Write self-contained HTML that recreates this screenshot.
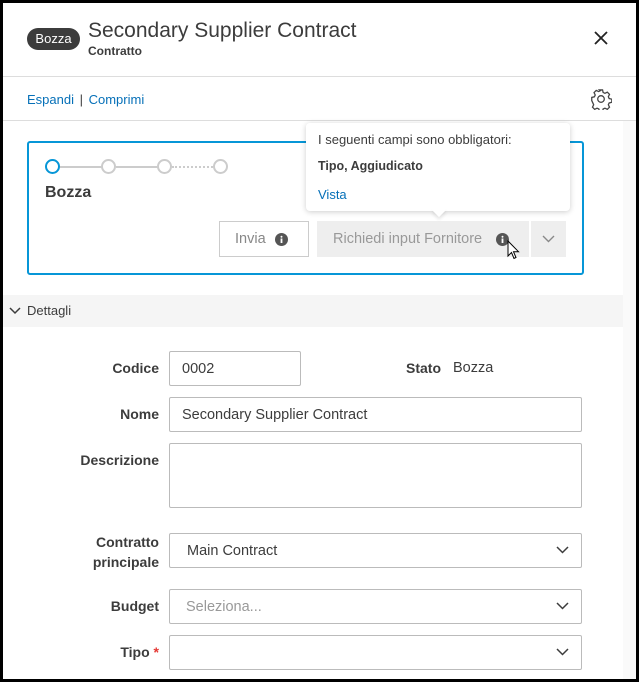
<!DOCTYPE html>
<html><head><meta charset="utf-8"><style>
*{box-sizing:border-box;margin:0;padding:0}
body{width:639px;height:682px;background:#000;position:relative;overflow:hidden;font-family:"Liberation Sans",sans-serif;color:#3c3c3c;letter-spacing:0}
.a{position:absolute}
#page{left:3px;top:3px;width:633px;height:676px;background:#fff;overflow:hidden}
.line{height:1px;background:#ddd;left:0;width:633px}
.inp{border:1px solid #bbb;border-radius:2px;background:#fff;font-size:14.5px;color:#3c3c3c;padding-left:12px;display:flex;align-items:center}
.lbl{font-size:14px;font-weight:bold;color:#3c3c3c;text-align:right;width:160px;left:0}
.chev{position:absolute;right:12px;top:12px}
.circ{width:15px;height:15px;border:2px solid #ccc;border-radius:50%;background:#fff}
</style></head><body>
<div id="page" class="a">
<div class="a" style="left:24px;top:25px;width:53px;height:22px;border-radius:11px;background:#3c3c3c;color:#fff;font-size:13px;text-align:center;line-height:22px">Bozza</div>
<div class="a" style="left:85px;top:16px;font-size:21px;color:#3c3c3c">Secondary Supplier Contract</div>
<div class="a" style="left:85px;top:41px;font-size:12px;font-weight:bold;color:#3c3c3c">Contratto</div>
<svg class="a" style="left:591px;top:28px" width="14" height="14"><path d="M1 1L13 13M13 1L1 13" stroke="#222" stroke-width="1.8"/></svg>
<div class="a line" style="top:73px"></div>
<div class="a" style="left:24px;top:89px;font-size:13px;color:#0670b8">Espandi <span style="color:#3c3c3c;margin:0 2px">|</span> Comprimi</div>
<svg class="a" style="left:587px;top:85px" width="22" height="22" viewBox="0 0 24 24"><path d="M10.3 2h3.4l.6 2.8 2 1 2.6-1.3 2.4 2.4-1.3 2.6.9 2 2.9.7v3.4l-2.9.7-.9 2 1.3 2.6-2.4 2.4-2.6-1.3-2 .9-.6 2.9h-3.4l-.6-2.9-2-.9-2.6 1.3-2.4-2.4 1.3-2.6-.9-2L1.9 13.7v-3.4l2.9-.7.9-2-1.3-2.6 2.4-2.4 2.6 1.3 2-1z" fill="none" stroke="#444" stroke-width="1.4"/><circle cx="12" cy="12" r="3.6" fill="none" stroke="#444" stroke-width="1.4"/></svg>
<div class="a line" style="top:117px"></div>
<div class="a" style="left:620px;top:118px;width:13px;height:560px;background:#fafafa"></div>
<div class="a" style="left:24px;top:138px;width:557px;height:134px;border:2px solid #0696d7;border-radius:3px"></div>
<div class="a" style="left:57px;top:163px;width:48px;height:2px;background:#ccc"></div>
<div class="a" style="left:113px;top:163px;width:48px;height:2px;background:#ccc"></div>
<div class="a" style="left:169px;top:163px;width:48px;border-top:2px dotted #ccc"></div>
<div class="a circ" style="left:42px;top:156px;border-color:#0696d7"></div>
<div class="a circ" style="left:98px;top:156px"></div>
<div class="a circ" style="left:154px;top:156px"></div>
<div class="a circ" style="left:210px;top:156px"></div>
<div class="a" style="left:42px;top:181px;font-size:16px;font-weight:bold;color:#3c3c3c">Bozza</div>
<div class="a" style="left:216px;top:218px;width:90px;height:36px;border:1px solid #ccc;font-size:14.5px;color:#888;display:flex;align-items:center;padding-left:15px">Invia<svg style="margin-left:9px" width="13" height="13"><circle cx="6.5" cy="6.5" r="6.5" fill="#555"/><rect x="5.6" y="5.5" width="1.8" height="4.5" fill="#fff"/><circle cx="6.5" cy="3.8" r="1" fill="#fff"/></svg></div>
<div class="a" style="left:314px;top:218px;width:212px;height:36px;background:#eee;font-size:14.5px;color:#999;display:flex;align-items:center;padding-left:16px;white-space:nowrap">Richiedi input Fornitore<svg style="margin-left:14px" width="13" height="13"><circle cx="6.5" cy="6.5" r="6.5" fill="#555"/><rect x="5.6" y="5.5" width="1.8" height="4.5" fill="#fff"/><circle cx="6.5" cy="3.8" r="1" fill="#fff"/></svg></div>
<div class="a" style="left:528px;top:218px;width:35px;height:36px;background:#eee"><svg class="a" style="left:11px;top:14px" width="13" height="8"><path d="M1 1l5.5 5.5L12 1" fill="none" stroke="#888" stroke-width="1.4"/></svg></div>
<svg class="a" style="left:504px;top:237px" width="14" height="22"><path d="M1 1v15l3.5-3.5 2.5 6 2-1-2.5-5.8h5z" fill="#fff" stroke="#000" stroke-width="1"/></svg>
<div class="a" style="left:303px;top:120px;width:264px;height:88px;background:#fff;border-radius:4px;box-shadow:0 1px 6px rgba(0,0,0,.2)"></div>
<div class="a" style="left:431px;top:202px;width:10px;height:10px;background:#fff;transform:rotate(45deg);box-shadow:2px 2px 3px rgba(0,0,0,.1)"></div>
<div class="a" style="left:303px;top:120px;width:264px;height:86px;background:#fff;border-radius:4px"></div>
<div class="a" style="left:315px;top:129px;font-size:13px;color:#3c3c3c">I seguenti campi sono obbligatori:</div>
<div class="a" style="left:315px;top:156px;font-size:12.5px;font-weight:bold;color:#3c3c3c">Tipo, Aggiudicato</div>
<div class="a" style="left:315px;top:184px;font-size:13px;color:#0670b8">Vista</div>
<div class="a" style="left:0;top:292px;width:620px;height:32px;background:#f5f5f5"></div>
<svg class="a" style="left:6px;top:304px" width="12" height="8"><path d="M1 1l5 5 5-5" fill="none" stroke="#3c3c3c" stroke-width="1.5"/></svg>
<div class="a" style="left:24px;top:300px;font-size:13px;color:#3c3c3c">Dettagli</div>
<div class="a lbl" style="top:357px;width:156px">Codice</div>
<div class="a inp" style="left:166px;top:348px;width:132px;height:35px">0002</div>
<div class="a" style="left:403px;top:357px;font-size:14px;font-weight:bold">Stato</div>
<div class="a" style="left:450px;top:357px;font-size:14.5px">Bozza</div>
<div class="a lbl" style="top:403px;width:156px">Nome</div>
<div class="a inp" style="left:166px;top:394px;width:413px;height:35px">Secondary Supplier Contract</div>
<div class="a lbl" style="top:449px;width:156px">Descrizione</div>
<div class="a inp" style="left:166px;top:440px;width:413px;height:65px"></div>
<div class="a lbl" style="top:529px;width:156px;line-height:20px">Contratto<br>principale</div>
<div class="a inp" style="left:166px;top:530px;width:413px;height:35px;padding-left:17px">Main Contract<svg class="chev" width="13" height="8"><path d="M1 1l5.5 5.5L12 1" fill="none" stroke="#3c3c3c" stroke-width="1.5"/></svg></div>
<div class="a lbl" style="top:595px;width:156px">Budget</div>
<div class="a inp" style="left:166px;top:586px;width:413px;height:35px;padding-left:16px;color:#999">Seleziona...<svg class="chev" width="13" height="8"><path d="M1 1l5.5 5.5L12 1" fill="none" stroke="#3c3c3c" stroke-width="1.5"/></svg></div>
<div class="a lbl" style="top:641px;width:156px">Tipo <span style="color:#e53935">*</span></div>
<div class="a inp" style="left:166px;top:632px;width:413px;height:35px"><svg class="chev" width="13" height="8"><path d="M1 1l5.5 5.5L12 1" fill="none" stroke="#3c3c3c" stroke-width="1.5"/></svg></div>
</div>
</body></html>
